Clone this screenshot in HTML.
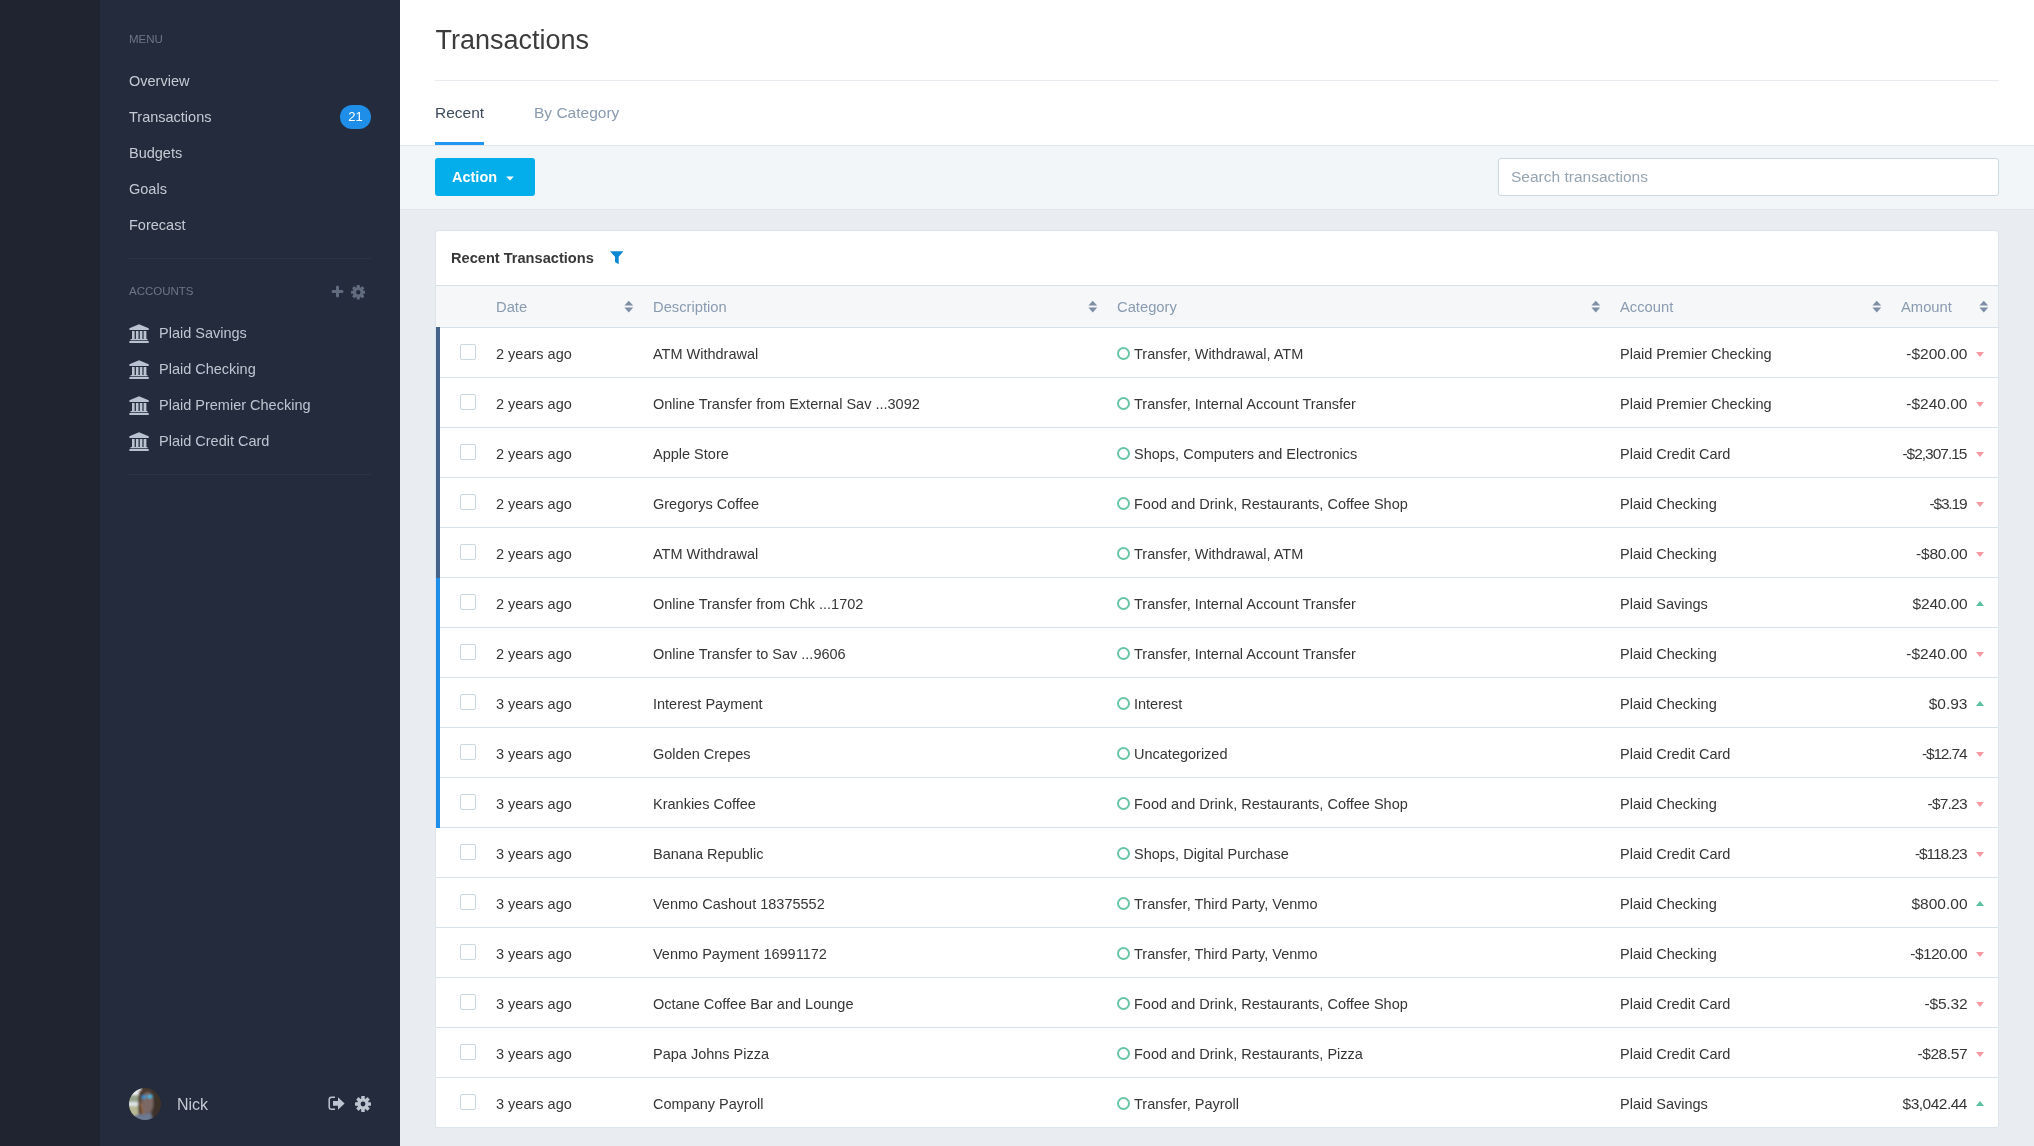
<!DOCTYPE html>
<html><head><meta charset="utf-8">
<style>
*{box-sizing:border-box;margin:0;padding:0}
html,body{width:2034px;height:1146px;overflow:hidden;background:#e9edf2;font-family:"Liberation Sans",sans-serif;}
.abs{position:absolute}
#strip{left:0;top:0;width:100px;height:1146px;background:#1f2430}
#side{left:100px;top:0;width:300px;height:1146px;background:#232b3c}
.sl{position:absolute;left:29px;font-size:11.5px;color:#6c7686;line-height:14px;white-space:nowrap}
.nav{position:absolute;left:29px;font-size:14.5px;color:#c5cbd4;line-height:18px;white-space:nowrap}
.badge{position:absolute;left:240px;top:105px;width:31px;height:24px;border-radius:12px;background:#1e8ee8;color:#fff;font-size:13px;line-height:24px;text-align:center}
.hr{position:absolute;left:29px;width:242px;height:1px;background:#2b3546}
.acc{position:absolute;left:59px;font-size:14.5px;color:#bec6d1;line-height:18px;white-space:nowrap}
.bank{position:absolute;left:29px;width:20px;height:19px}
#main{left:400px;top:0;width:1634px;height:1146px;background:#e9edf2}
#head{position:absolute;left:0;top:0;width:1634px;height:145px;background:#fff}
#title{position:absolute;left:35.5px;top:23px;font-size:27px;color:#3c3c3c;line-height:34px;white-space:nowrap}
#hdiv{position:absolute;left:35px;top:80px;width:1564px;height:1px;background:#e8ebef}
.tab{position:absolute;top:103px;font-size:15.5px;line-height:20px;white-space:nowrap}
#tabline{position:absolute;left:35px;top:142px;width:49px;height:3px;background:#2196f3}
#tool{position:absolute;left:0;top:145px;width:1634px;height:65px;background:#f3f6f9;border-top:1px solid #e3e7eb;border-bottom:1px solid #e3e7eb}
#btn{position:absolute;left:35px;top:12px;width:100px;height:38px;background:#03aeea;border-radius:3px;color:#fff;font-weight:bold;font-size:14.5px}
#search{position:absolute;left:1098px;top:12px;width:501px;height:38px;background:#fff;border:1px solid #cbd8e0;border-radius:3px}
#card{position:absolute;left:35px;top:230px;width:1564px;height:898px;background:#fff;border:1px solid #dde4ea;border-radius:4px 4px 2px 2px;overflow:hidden}
#ctitle{position:absolute;left:15px;top:17px;font-size:14.6px;font-weight:bold;color:#383838;line-height:20px;white-space:nowrap}
#thead{position:absolute;left:0;top:54px;width:1562px;height:43px;background:#f5f7f9;border-top:1px solid #d6e0e7;border-bottom:1px solid #d6e0e7}
.th{position:absolute;top:12px;font-size:14.75px;color:#8a9bb0;line-height:18px;white-space:nowrap}
.sort{position:absolute;top:14px;width:10px;height:13px}
.row{position:absolute;left:0;width:1562px;height:50px;border-bottom:1px solid #d9e3ea}
.bar{position:absolute;left:0;top:0;width:4px;height:50px}
.cb{position:absolute;left:24px;top:16px;width:16px;height:16px;border:1px solid #c8d6df;border-radius:2px;background:#fff}
.td{position:absolute;top:17px;font-size:14.5px;color:#363636;line-height:18px;white-space:nowrap}
.circ{position:absolute;left:681px;top:19px;width:13px;height:13px;border:2px solid #68c5a3;border-radius:50%}
.amt{position:absolute;right:30.5px;top:17px;font-size:15.5px;color:#363636;line-height:18px;white-space:nowrap;text-align:right}
.tri{position:absolute;left:1540px;width:0;height:0;border-left:4px solid transparent;border-right:4px solid transparent}
.dn{top:24px;border-top:5px solid #f59aa3}
.up{top:23px;border-bottom:5px solid #5cc29d}
</style></head><body>
<div id="root" style="position:absolute;left:0;top:0;width:2034px;height:1146px;will-change:transform;background:#e9edf2">
<div id="strip" class="abs"></div>
<div id="side" class="abs">
  <div class="sl" style="top:32px">MENU</div>
  <div class="nav" style="top:72px">Overview</div>
  <div class="nav" style="top:108px">Transactions</div>
  <div class="badge">21</div>
  <div class="nav" style="top:144px">Budgets</div>
  <div class="nav" style="top:180px">Goals</div>
  <div class="nav" style="top:216px">Forecast</div>
  <div class="hr" style="top:258px"></div>
  <div class="sl" style="top:284px">ACCOUNTS</div>
  <div class="hr" style="top:474px"></div>
<div class="abs" style="left:28.5px;top:324px;width:20px;height:19px"><svg width="20" height="19" viewBox="0 0 20 19"><path fill="#b9c3cf" d="M0.4 4.3 L10 0.2 L19.7 4.3 V6 H0.4 Z M3 6.9 h2.6 v8 h-2.6 Z M6.9 6.9 h2.6 v8 h-2.6 Z M10.8 6.9 h2.6 v8 h-2.6 Z M14.6 6.9 h2.8 v8 h-2.8 Z M1.5 15 h17 v1.2 h-17 Z M0.4 16.9 h19.3 v2 h-19.3 Z"/></svg></div>
<div class="acc" style="top:324px">Plaid Savings</div>
<div class="abs" style="left:28.5px;top:360px;width:20px;height:19px"><svg width="20" height="19" viewBox="0 0 20 19"><path fill="#b9c3cf" d="M0.4 4.3 L10 0.2 L19.7 4.3 V6 H0.4 Z M3 6.9 h2.6 v8 h-2.6 Z M6.9 6.9 h2.6 v8 h-2.6 Z M10.8 6.9 h2.6 v8 h-2.6 Z M14.6 6.9 h2.8 v8 h-2.8 Z M1.5 15 h17 v1.2 h-17 Z M0.4 16.9 h19.3 v2 h-19.3 Z"/></svg></div>
<div class="acc" style="top:360px">Plaid Checking</div>
<div class="abs" style="left:28.5px;top:396px;width:20px;height:19px"><svg width="20" height="19" viewBox="0 0 20 19"><path fill="#b9c3cf" d="M0.4 4.3 L10 0.2 L19.7 4.3 V6 H0.4 Z M3 6.9 h2.6 v8 h-2.6 Z M6.9 6.9 h2.6 v8 h-2.6 Z M10.8 6.9 h2.6 v8 h-2.6 Z M14.6 6.9 h2.8 v8 h-2.8 Z M1.5 15 h17 v1.2 h-17 Z M0.4 16.9 h19.3 v2 h-19.3 Z"/></svg></div>
<div class="acc" style="top:396px">Plaid Premier Checking</div>
<div class="abs" style="left:28.5px;top:432px;width:20px;height:19px"><svg width="20" height="19" viewBox="0 0 20 19"><path fill="#b9c3cf" d="M0.4 4.3 L10 0.2 L19.7 4.3 V6 H0.4 Z M3 6.9 h2.6 v8 h-2.6 Z M6.9 6.9 h2.6 v8 h-2.6 Z M10.8 6.9 h2.6 v8 h-2.6 Z M14.6 6.9 h2.8 v8 h-2.8 Z M1.5 15 h17 v1.2 h-17 Z M0.4 16.9 h19.3 v2 h-19.3 Z"/></svg></div>
<div class="acc" style="top:432px">Plaid Credit Card</div>
<svg class="abs" style="left:231px;top:285px" width="13" height="13" viewBox="0 0 13 13"><path stroke="#616c7e" stroke-width="3" stroke-linecap="round" d="M6.5 2v9M2 6.5h9"/></svg><svg class="abs" style="left:250.5px;top:285px" width="14.5" height="14.5" viewBox="-7.25 -7.25 14.5 14.5"><circle cx="0" cy="0" r="5.37" fill="#616c7e"/><rect x="-1.59" y="-7.25" width="3.19" height="7.25" rx="0.6" fill="#616c7e" transform="rotate(0)"/><rect x="-1.59" y="-7.25" width="3.19" height="7.25" rx="0.6" fill="#616c7e" transform="rotate(45)"/><rect x="-1.59" y="-7.25" width="3.19" height="7.25" rx="0.6" fill="#616c7e" transform="rotate(90)"/><rect x="-1.59" y="-7.25" width="3.19" height="7.25" rx="0.6" fill="#616c7e" transform="rotate(135)"/><rect x="-1.59" y="-7.25" width="3.19" height="7.25" rx="0.6" fill="#616c7e" transform="rotate(180)"/><rect x="-1.59" y="-7.25" width="3.19" height="7.25" rx="0.6" fill="#616c7e" transform="rotate(225)"/><rect x="-1.59" y="-7.25" width="3.19" height="7.25" rx="0.6" fill="#616c7e" transform="rotate(270)"/><rect x="-1.59" y="-7.25" width="3.19" height="7.25" rx="0.6" fill="#616c7e" transform="rotate(315)"/><circle cx="0" cy="0" r="2.17" fill="#232b3c"/></svg><svg class="abs" style="left:29px;top:1088px" width="32" height="32" viewBox="0 0 32 32"><defs><clipPath id="cp"><circle cx="16" cy="16" r="16"/></clipPath><filter id="bl" x="-10%" y="-10%" width="120%" height="120%"><feGaussianBlur stdDeviation="1.1"/></filter></defs><g clip-path="url(#cp)"><g filter="url(#bl)"><rect x="-2" y="-2" width="36" height="36" fill="#45372f"/><rect x="-2" y="-2" width="14" height="36" fill="#bdbb9c"/><rect x="-2" y="-2" width="14" height="9" fill="#eef0ee"/><rect x="-2" y="7" width="13" height="7" fill="#98a48c"/><rect x="-2" y="14" width="12" height="4" fill="#dde4e6"/><rect x="-2" y="18" width="12" height="12" fill="#b7b894"/><path d="M10 3 Q14 1 20 2 L12 8 Q11 16 13 26 L10 28 Q8 16 10 3 Z" fill="#4e3a2e"/><path d="M11 14 Q12 20 13 26 L16 27 L15 17 Z" fill="#9a6b43"/><ellipse cx="18.5" cy="15" rx="5.8" ry="11" fill="#7c6965"/><path d="M24 2 L34 6 V34 H22 L25 20 Z" fill="#3d302a"/><ellipse cx="15" cy="9" rx="2.6" ry="1.7" fill="#2e98de"/><ellipse cx="21" cy="8.5" rx="2.6" ry="1.8" fill="#3cbde6"/><path d="M6 27 L22 25 L24 34 H4 Z" fill="#6c7a92"/></g></g></svg><div class="abs" style="left:77px;top:1095.5px;font-size:16px;color:#c5cbd4;line-height:18px">Nick</div><svg class="abs" style="left:228px;top:1096px" width="17" height="15" viewBox="0 0 17 15"><path fill="none" stroke="#bcc5d0" stroke-width="1.5" d="M7 1.2 H3.5 Q1.2 1.2 1.2 3.5 V11 Q1.2 13.3 3.5 13.3 H7"/><path fill="#bcc5d0" d="M5 5.1 H10 V1.2 L16.6 7.4 L10 13.8 V9.7 H5 Z"/></svg><svg class="abs" style="left:255px;top:1095.5px" width="16" height="16" viewBox="-8.0 -8.0 16 16"><circle cx="0" cy="0" r="5.76" fill="#bcc5d0"/><rect x="-1.76" y="-8.00" width="3.52" height="8.00" rx="0.6" fill="#bcc5d0" transform="rotate(0)"/><rect x="-1.76" y="-8.00" width="3.52" height="8.00" rx="0.6" fill="#bcc5d0" transform="rotate(45)"/><rect x="-1.76" y="-8.00" width="3.52" height="8.00" rx="0.6" fill="#bcc5d0" transform="rotate(90)"/><rect x="-1.76" y="-8.00" width="3.52" height="8.00" rx="0.6" fill="#bcc5d0" transform="rotate(135)"/><rect x="-1.76" y="-8.00" width="3.52" height="8.00" rx="0.6" fill="#bcc5d0" transform="rotate(180)"/><rect x="-1.76" y="-8.00" width="3.52" height="8.00" rx="0.6" fill="#bcc5d0" transform="rotate(225)"/><rect x="-1.76" y="-8.00" width="3.52" height="8.00" rx="0.6" fill="#bcc5d0" transform="rotate(270)"/><rect x="-1.76" y="-8.00" width="3.52" height="8.00" rx="0.6" fill="#bcc5d0" transform="rotate(315)"/><circle cx="0" cy="0" r="2.40" fill="#232b3c"/></svg>
</div>
<div id="main" class="abs">
  <div id="head">
    <div id="title">Transactions</div>
    <div id="hdiv"></div>
    <div class="tab" style="left:35px;color:#3e4b5b">Recent</div>
    <div class="tab" style="left:134px;color:#8a9bb0">By Category</div>
    <div id="tabline"></div>
  </div>
  <div id="tool">
    <div id="btn"><span class="abs" style="left:17px;top:10px;line-height:18px">Action</span><svg class="abs" style="left:71px;top:17.5px" width="8" height="5" viewBox="0 0 8 5"><path fill="#fff" d="M0.2 0.5H7.8L4 4.6Z"/></svg></div>
    <div id="search"><span class="abs" style="left:12px;top:9px;font-size:15.5px;color:#95a4b0;line-height:18px;white-space:nowrap">Search transactions</span></div>
  </div>
  <div id="card">
    <div id="ctitle">Recent Transactions</div><svg class="abs" style="left:174px;top:20px" width="14" height="14" viewBox="0 0 14 14"><path fill="#0a87d2" d="M0.5 0.2 H13 V0.8 L8.7 5.8 V12.9 H8.2 L5 10.9 V5.8 L0.5 0.8 Z"/></svg>
    <div class="abs" style="left:0;top:95px;width:4px;height:1px;background:#fff;z-index:2"></div><div id="thead"><div class="th" style="left:60px">Date</div><div class="th" style="left:217px">Description</div><div class="th" style="left:681px">Category</div><div class="th" style="left:1184px">Account</div><div class="th" style="left:1465px">Amount</div><svg class="sort" style="left:188px" width="10" height="13" viewBox="0 0 10 13"><path fill="#7d8ea5" d="M0.4 5.6 L4.8 0.7 L9.2 5.6 Z M0.4 7.4 H9.2 L4.8 12.6 Z"/></svg><svg class="sort" style="left:652px" width="10" height="13" viewBox="0 0 10 13"><path fill="#7d8ea5" d="M0.4 5.6 L4.8 0.7 L9.2 5.6 Z M0.4 7.4 H9.2 L4.8 12.6 Z"/></svg><svg class="sort" style="left:1155px" width="10" height="13" viewBox="0 0 10 13"><path fill="#7d8ea5" d="M0.4 5.6 L4.8 0.7 L9.2 5.6 Z M0.4 7.4 H9.2 L4.8 12.6 Z"/></svg><svg class="sort" style="left:1436px" width="10" height="13" viewBox="0 0 10 13"><path fill="#7d8ea5" d="M0.4 5.6 L4.8 0.7 L9.2 5.6 Z M0.4 7.4 H9.2 L4.8 12.6 Z"/></svg><svg class="sort" style="left:1543px" width="10" height="13" viewBox="0 0 10 13"><path fill="#7d8ea5" d="M0.4 5.6 L4.8 0.7 L9.2 5.6 Z M0.4 7.4 H9.2 L4.8 12.6 Z"/></svg></div>
    <div class="row" style="top:97px"><div class="cb"></div><div class="td" style="left:60px">2 years ago</div><div class="td" style="left:217px">ATM Withdrawal</div><div class="circ"></div><div class="td" style="left:698px">Transfer, Withdrawal, ATM</div><div class="td" style="left:1184px">Plaid Premier Checking</div><div class="amt" style="letter-spacing:0.00px;margin-right:-0.00px">-$200.00</div><div class="tri dn"></div></div>
<div class="row" style="top:147px"><div class="cb"></div><div class="td" style="left:60px">2 years ago</div><div class="td" style="left:217px">Online Transfer from External Sav ...3092</div><div class="circ"></div><div class="td" style="left:698px">Transfer, Internal Account Transfer</div><div class="td" style="left:1184px">Plaid Premier Checking</div><div class="amt" style="letter-spacing:0.00px;margin-right:-0.00px">-$240.00</div><div class="tri dn"></div></div>
<div class="row" style="top:197px"><div class="cb"></div><div class="td" style="left:60px">2 years ago</div><div class="td" style="left:217px">Apple Store</div><div class="circ"></div><div class="td" style="left:698px">Shops, Computers and Electronics</div><div class="td" style="left:1184px">Plaid Credit Card</div><div class="amt" style="letter-spacing:-1.00px;margin-right:1.00px">-$2,307.15</div><div class="tri dn"></div></div>
<div class="row" style="top:247px"><div class="cb"></div><div class="td" style="left:60px">2 years ago</div><div class="td" style="left:217px">Gregorys Coffee</div><div class="circ"></div><div class="td" style="left:698px">Food and Drink, Restaurants, Coffee Shop</div><div class="td" style="left:1184px">Plaid Checking</div><div class="amt" style="letter-spacing:-1.20px;margin-right:1.20px">-$3.19</div><div class="tri dn"></div></div>
<div class="row" style="top:297px"><div class="cb"></div><div class="td" style="left:60px">2 years ago</div><div class="td" style="left:217px">ATM Withdrawal</div><div class="circ"></div><div class="td" style="left:698px">Transfer, Withdrawal, ATM</div><div class="td" style="left:1184px">Plaid Checking</div><div class="amt" style="letter-spacing:-0.17px;margin-right:0.17px">-$80.00</div><div class="tri dn"></div></div>
<div class="row" style="top:347px"><div class="cb"></div><div class="td" style="left:60px">2 years ago</div><div class="td" style="left:217px">Online Transfer from Chk ...1702</div><div class="circ"></div><div class="td" style="left:698px">Transfer, Internal Account Transfer</div><div class="td" style="left:1184px">Plaid Savings</div><div class="amt" style="letter-spacing:-0.17px;margin-right:0.17px">$240.00</div><div class="tri up"></div></div>
<div class="row" style="top:397px"><div class="cb"></div><div class="td" style="left:60px">2 years ago</div><div class="td" style="left:217px">Online Transfer to Sav ...9606</div><div class="circ"></div><div class="td" style="left:698px">Transfer, Internal Account Transfer</div><div class="td" style="left:1184px">Plaid Checking</div><div class="amt" style="letter-spacing:0.00px;margin-right:-0.00px">-$240.00</div><div class="tri dn"></div></div>
<div class="row" style="top:447px"><div class="cb"></div><div class="td" style="left:60px">3 years ago</div><div class="td" style="left:217px">Interest Payment</div><div class="circ"></div><div class="td" style="left:698px">Interest</div><div class="td" style="left:1184px">Plaid Checking</div><div class="amt" style="letter-spacing:0.00px;margin-right:-0.00px">$0.93</div><div class="tri up"></div></div>
<div class="row" style="top:497px"><div class="cb"></div><div class="td" style="left:60px">3 years ago</div><div class="td" style="left:217px">Golden Crepes</div><div class="circ"></div><div class="td" style="left:698px">Uncategorized</div><div class="td" style="left:1184px">Plaid Credit Card</div><div class="amt" style="letter-spacing:-1.17px;margin-right:1.17px">-$12.74</div><div class="tri dn"></div></div>
<div class="row" style="top:547px"><div class="cb"></div><div class="td" style="left:60px">3 years ago</div><div class="td" style="left:217px">Krankies Coffee</div><div class="circ"></div><div class="td" style="left:698px">Food and Drink, Restaurants, Coffee Shop</div><div class="td" style="left:1184px">Plaid Checking</div><div class="amt" style="letter-spacing:-0.80px;margin-right:0.80px">-$7.23</div><div class="tri dn"></div></div>
<div class="row" style="top:597px"><div class="cb"></div><div class="td" style="left:60px">3 years ago</div><div class="td" style="left:217px">Banana Republic</div><div class="circ"></div><div class="td" style="left:698px">Shops, Digital Purchase</div><div class="td" style="left:1184px">Plaid Credit Card</div><div class="amt" style="letter-spacing:-1.07px;margin-right:1.07px">-$118.23</div><div class="tri dn"></div></div>
<div class="row" style="top:647px"><div class="cb"></div><div class="td" style="left:60px">3 years ago</div><div class="td" style="left:217px">Venmo Cashout 18375552</div><div class="circ"></div><div class="td" style="left:698px">Transfer, Third Party, Venmo</div><div class="td" style="left:1184px">Plaid Checking</div><div class="amt" style="letter-spacing:0.00px;margin-right:-0.00px">$800.00</div><div class="tri up"></div></div>
<div class="row" style="top:697px"><div class="cb"></div><div class="td" style="left:60px">3 years ago</div><div class="td" style="left:217px">Venmo Payment 16991172</div><div class="circ"></div><div class="td" style="left:698px">Transfer, Third Party, Venmo</div><div class="td" style="left:1184px">Plaid Checking</div><div class="amt" style="letter-spacing:-0.57px;margin-right:0.57px">-$120.00</div><div class="tri dn"></div></div>
<div class="row" style="top:747px"><div class="cb"></div><div class="td" style="left:60px">3 years ago</div><div class="td" style="left:217px">Octane Coffee Bar and Lounge</div><div class="circ"></div><div class="td" style="left:698px">Food and Drink, Restaurants, Coffee Shop</div><div class="td" style="left:1184px">Plaid Credit Card</div><div class="amt" style="letter-spacing:-0.20px;margin-right:0.20px">-$5.32</div><div class="tri dn"></div></div>
<div class="row" style="top:797px"><div class="cb"></div><div class="td" style="left:60px">3 years ago</div><div class="td" style="left:217px">Papa Johns Pizza</div><div class="circ"></div><div class="td" style="left:698px">Food and Drink, Restaurants, Pizza</div><div class="td" style="left:1184px">Plaid Credit Card</div><div class="amt" style="letter-spacing:-0.42px;margin-right:0.42px">-$28.57</div><div class="tri dn"></div></div>
<div class="row" style="top:847px"><div class="cb"></div><div class="td" style="left:60px">3 years ago</div><div class="td" style="left:217px">Company Payroll</div><div class="circ"></div><div class="td" style="left:698px">Transfer, Payroll</div><div class="td" style="left:1184px">Plaid Savings</div><div class="amt" style="letter-spacing:-0.50px;margin-right:0.50px">$3,042.44</div><div class="tri up"></div></div>
<div class="abs" style="left:0;top:546px;width:4px;height:51px;background:#1e8ee8"></div>
<div class="abs" style="left:0;top:496px;width:4px;height:51px;background:#1e8ee8"></div>
<div class="abs" style="left:0;top:446px;width:4px;height:51px;background:#1e8ee8"></div>
<div class="abs" style="left:0;top:396px;width:4px;height:51px;background:#1e8ee8"></div>
<div class="abs" style="left:0;top:346px;width:4px;height:51px;background:#1e8ee8"></div>
<div class="abs" style="left:0;top:296px;width:4px;height:51px;background:#46648b"></div>
<div class="abs" style="left:0;top:246px;width:4px;height:51px;background:#46648b"></div>
<div class="abs" style="left:0;top:196px;width:4px;height:51px;background:#46648b"></div>
<div class="abs" style="left:0;top:146px;width:4px;height:51px;background:#46648b"></div>
<div class="abs" style="left:0;top:96px;width:4px;height:51px;background:#46648b"></div>
  </div>
</div>
</div>
</body></html>
